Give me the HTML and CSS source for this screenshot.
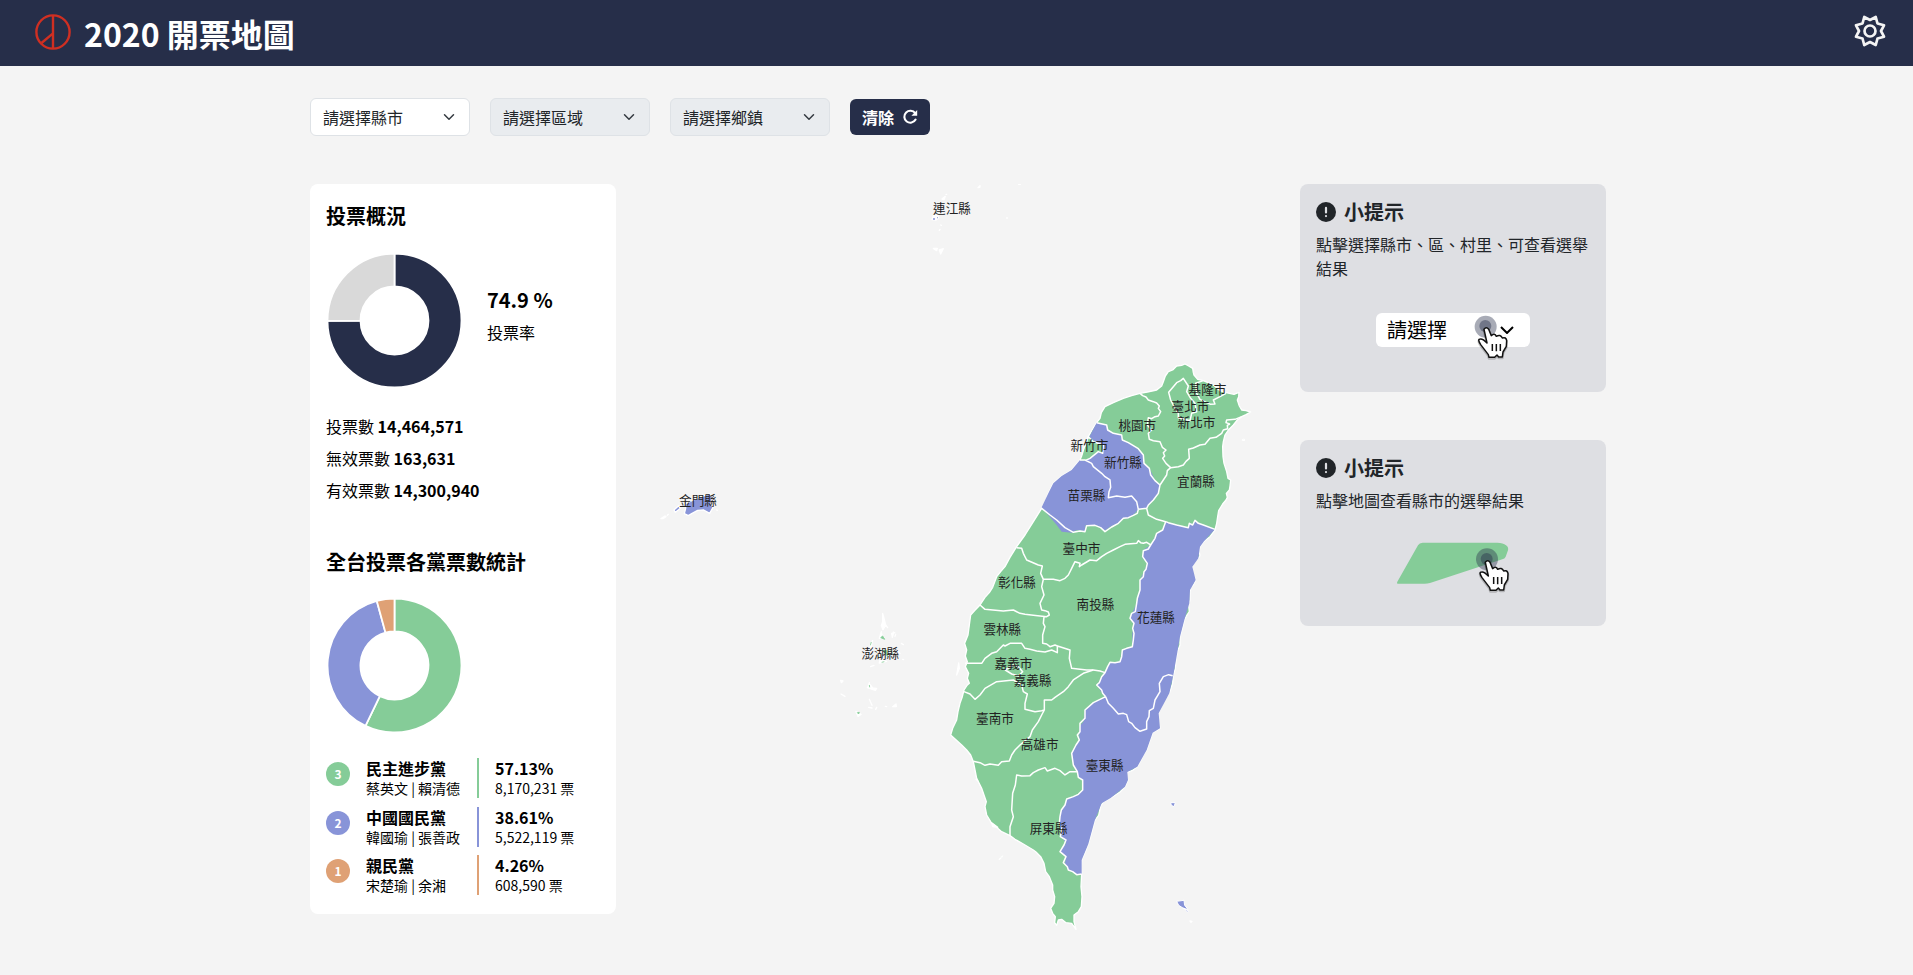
FILE: index.html
```html
<!DOCTYPE html>
<html lang="zh-Hant">
<head>
<meta charset="utf-8">
<title>2020 開票地圖</title>
<link rel="stylesheet" href="styles.css">
</head>
<body>
<header class="topbar">
  <svg class="logo" width="36" height="36" viewBox="0 0 36 36"><circle cx="18" cy="18" r="16.6"/><path d="M18 1.5v33M18 19.3 6.5 29"/></svg>
  <h1 class="brand">2020 開票地圖</h1>
  <svg class="gear" width="34" height="34" viewBox="-17 -17 34 34"><path d="M0-11 5.74-14 7.5-7.5 14-5.74 11 0 14 5.74 7.5 7.5 5.74 14 0 11-5.74 14-7.5 7.5-14 5.74-11 0-14-5.74-7.5-7.5-5.74-14Z"/><circle r="5.5"/></svg>
</header>

<main class="page">
  <div class="filters">
    <div class="select">請選擇縣市<svg width="12" height="12" viewBox="0 0 16 16"><path d="m2 5 6 6 6-6"/></svg></div>
    <div class="select disabled">請選擇區域<svg width="12" height="12" viewBox="0 0 16 16"><path d="m2 5 6 6 6-6"/></svg></div>
    <div class="select disabled">請選擇鄉鎮<svg width="12" height="12" viewBox="0 0 16 16"><path d="m2 5 6 6 6-6"/></svg></div>
    <button class="clear">清除<svg width="16" height="16" viewBox="0 0 16 16"><path class="arc" d="M13.2 4.2A6 6 0 1 0 13.6 10.6"/><path class="tip" d="M15.2 1v5.8H9.4Z"/></svg></button>
  </div>

  <div class="columns">
    <section class="panel">
      <h2>投票概況</h2>
      <div class="turnout">
        <svg class="donut" width="137" height="137" viewBox="-68.5 -68.5 137 137">
          <path fill="#262e49" d="M0-67A67 67 0 1 1-67 .4L-34 .2A34 34 0 1 0 0-34Z"/>
          <path fill="#d9d9d9" d="M-67 .4A67 67 0 0 1 0-67V-34A34 34 0 0 0-34 .2Z"/>
        </svg>
        <div><div class="rate">74.9 %</div><div>投票率</div></div>
      </div>
      <div class="totals">
        <div>投票數 <b>14,464,571</b></div>
        <div>無效票數 <b>163,631</b></div>
        <div>有效票數 <b>14,300,940</b></div>
      </div>
      <h2 class="second">全台投票各黨票數統計</h2>
      <svg class="donut" width="137" height="137" viewBox="-68.5 -68.5 137 137">
        <path fill="#85cc98" d="M0-67A67 67 0 1 1-29 60.4L-14.7 30.7A34 34 0 1 0 0-34Z"/>
        <path fill="#8894d8" d="M-29 60.4A67 67 0 0 1-17.7-64.6L-9-32.8A34 34 0 0 0-14.7 30.7Z"/>
        <path fill="#dfa175" d="M-17.7-64.6A67 67 0 0 1 0-67V-34A34 34 0 0 0-9-32.8Z"/>
      </svg>
      <ul class="parties">
        <li class="green"><span class="no">3</span><div class="who"><b>民主進步黨</b><small>蔡英文 | 賴清德</small></div><div class="votes"><b>57.13%</b><small>8,170,231 票</small></div></li>
        <li class="blue"><span class="no">2</span><div class="who"><b>中國國民黨</b><small>韓國瑜 | 張善政</small></div><div class="votes"><b>38.61%</b><small>5,522,119 票</small></div></li>
        <li class="orange"><span class="no">1</span><div class="who"><b>親民黨</b><small>宋楚瑜 | 余湘</small></div><div class="votes"><b>4.26%</b><small>608,590 票</small></div></li>
      </ul>
    </section>

    <svg class="map" width="636" height="760" viewBox="640 184 636 760">
      <!-- main island: one unit is a third of a pixel -->
      <g transform="translate(930 350) scale(.33333)">
        <path class="land dpp" d="M765 42 776 48 788 55 790 68 792 75 803 88 820 92 850 105 870 122 888 128 912 133 927 127 926 140 922 150 928 168 935 180 948 182 962 186 948 194 935 200 922 210 910 225 895 240 885 255 880 275 878 290 879 320 882 340 890 365 894 385 902 390 900 408 898 420 889 430 892 442 888 450 878 462 866 482 863 500 860 520 855 540 840 560 822 574 810 590 807 605 810 616 805 625 792 635 787 650 788 670 797 690 790 705 782 712 780 730 780 750 776 765 778 785 770 797 763 810 758 832 750 860 750 885 742 905 738 930 736 955 730 975 728 1000 718 1030 706 1045 697 1062 686 1090 686 1115 690 1135 678 1142 668 1148 662 1165 650 1200 640 1215 632 1232 622 1250 606 1262 592 1266 588 1280 594 1290 585 1310 570 1326 542 1344 520 1356 512 1368 506 1396 494 1412 487 1440 480 1465 475 1482 466 1505 455 1530 454 1550 455 1572 453 1610 456 1640 454 1670 445 1685 432 1695 432 1715 438 1738 425 1720 408 1718 395 1708 385 1710 380 1726 374 1718 376 1700 368 1690 362 1675 372 1660 374 1640 368 1620 368 1605 358 1580 347 1565 342 1540 332 1520 318 1506 310 1500 280 1482 255 1468 240 1457 215 1445 198 1430 185 1420 170 1395 165 1370 169 1355 163 1338 155 1315 140 1285 135 1260 130 1235 122 1215 110 1200 95 1185 62 1155 68 1135 80 1110 84 1085 90 1060 97 1040 102 1020 112 1005 118 1000 112 985 116 970 106 950 112 935 106 918 110 900 104 880 114 855 118 825 122 795 134 782 150 765 165 742 178 728 188 712 200 680 212 665 225 650 240 622 260 590 285 555 312 512 335 475 345 458 355 430 370 400 395 378 425 360 450 330 455 318 462 295 475 260 486 240 500 218 510 205 514 188 525 170 550 158 580 145 605 137 630 130 652 126 680 120 695 108 700 95 706 78 715 65 728 60 740 48 755 46Z"/>
        <path class="kmt" d="M500 218 515 222 530 225 533 240 550 250 575 255 577 270 595 278 615 290 640 315 642 340 658 355 668 375 675 392 690 405 685 430 670 450 655 465 650 475 625 478 615 490 595 505 580 505 565 520 540 530 525 542 505 528 495 525 467 525 465 543 440 540 425 548 395 545 380 525 335 472 355 430 370 400 395 378 425 360 450 330 462 333 480 325 505 305 518 310 520 285 495 275 478 260Z"/>
        <path class="kmt" d="M707 515 740 525 775 533 780 518 790 525 795 513 820 525 855 538 822 574 810 590 805 625 787 650 797 690 780 720 778 760 763 810 750 860 738 930 730 975 718 1030 686 1090 690 1135 668 1148 650 1200 622 1250 592 1266 594 1290 585 1310 542 1344 515 1360 494 1412 475 1482 455 1530 455 1572 440 1572 415 1560 405 1540 408 1520 390 1505 408 1480 395 1460 388 1420 390 1390 405 1365 410 1347 445 1335 458 1320 458 1290 445 1282 442 1265 430 1245 425 1210 448 1170 448 1130 460 1115 465 1080 490 1058 525 1042 510 1020 500 1005 525 968 540 937 570 935 577 900 607 890 607 850 612 825 600 805 620 760 630 720 630 690 642 665 652 640 638 625 640 600 662 585 680 550 698 540Z"/>
        <g class="border">
          <path d="M630 130 638 137 648 141 655 150 670 155 680 159 688 168 685 175 692 185 685 198 675 200 665 206 655 203 652 225 665 240 655 250 658 268 670 272 690 275 697 292 708 300 700 308 704 318 698 325 708 340 722 353 745 350 760 345 768 334 778 325 776 298 790 294 810 285 825 283 840 265 858 262 875 250 880 240 893 236 892 226 899 222 888 218 890 210 915 208 935 200M722 353 712 362 710 375 700 390 690 405M500 218 530 225 533 240 550 250 575 255 577 270 595 278 615 290 625 296 640 315 642 340 658 355 662 375 675 392 690 405 685 430 670 450 655 465 650 475 625 478M650 475 655 495 680 508 707 515 715 518 740 525 775 533 778 520 788 525 795 511 805 520 820 525 855 538M625 478 620 455 605 438 585 442 560 438 535 443 537 425 542 412 540 390 525 380 515 370 490 350 485 340 465 330 450 330M462 295 475 260 490 275 520 285 518 310 505 305 480 325 465 332"/>
          <path d="M335 475 360 495 380 510 405 533 430 547 450 543 465 545 470 527 495 526 512 533 525 545 545 531 565 520 580 505 595 503 610 496 622 490 625 478M707 515 698 540 680 550 675 565 662 585 650 577 640 580 632 578 625 572 620 580 585 583 570 590 550 600 530 610 515 620 500 632 480 630 455 645 448 650 450 640 435 635 425 655 415 675 405 685 390 692 370 688 340 688 332 670 337 648 325 645 290 630 280 610 275 595 260 593M340 688 335 710 342 735 330 760 335 780 345 782 355 786 358 795 350 800 310 796 285 793 270 790 250 780 220 783 165 778 150 765M342 800 340 820 345 830 338 855 338 880 350 882 360 890 375 885 382 888 382 908 365 900 345 906 320 903 300 898 285 895 275 880 240 880 225 888 220 885 200 905 185 910 165 925 155 940 105 940M380 887 420 900 418 925 425 955 450 958 470 960 490 960 510 963 525 968"/>
          <path d="M662 585 655 597 640 602 638 620 652 640 648 658 642 665 640 680 630 690 630 720 622 745 620 760 616 785 605 790 600 805 612 820 608 835 612 850 610 870 607 890 590 895 577 900 575 920 570 935 555 938 540 937 533 950 525 968 515 980 508 998 500 1005 515 1020 518 1030 527 1040M102 1025 120 1032 135 1048 150 1035 165 1015 200 995 250 990 275 1005 280 1025 292 1032 285 1060 285 1078 315 1085 335 1082 343 1080 343 1050 365 1050 375 1042 400 1025 415 1010 430 990 460 970 490 960M130 1234 150 1238 165 1246 180 1242 205 1246 215 1235 238 1233 245 1215 255 1200 270 1185 300 1160 307 1140 325 1115 335 1095 343 1080M240 1457 240 1430 250 1400 245 1380 248 1330 256 1305 260 1275 275 1278 300 1277 310 1268 325 1260 345 1253 352 1263 375 1255 390 1262 405 1275 420 1265 442 1265"/>
          <path d="M527 1040 490 1058 465 1080 465 1105 450 1120 450 1145 442 1155 448 1170 438 1185 425 1210 430 1245 442 1265 445 1282 458 1290 458 1320 445 1333 430 1340 410 1347 405 1365 394 1380 390 1400 388 1420 395 1440 391 1460 408 1470 402 1485 390 1505 408 1520 400 1538 412 1550 415 1560 428 1565 440 1574 455 1572M527 1040 535 1060 550 1075 565 1092 580 1090 590 1094 596 1115 605 1120 615 1133 630 1144 650 1137 650 1115 657 1100 658 1082 670 1075 675 1050 690 1025 688 1000 700 980 716 974 728 977"/>
          <path d="M760 85 752 92 740 98 716 127 722 150 735 175 745 190 745 203 780 212 785 190 800 185 795 160 782 145 770 125 775 108ZM820 92 797 100 800 130 810 148 830 158 842 163 855 162 850 150 870 140 888 130M226 960 250 945 265 950 278 965 265 978 245 972Z"/>
        </g>
        <path class="isle" d="m88 955-8 20 6-36ZM185 1418l18 14-15-2ZM138 1288l5 4"/>
        <path class="islet kmt" d="M722 1358h14l-4 12-8-4ZM740 1654l22-3 2 15 10 12-12-2-16-10ZM760 1674l16 10-4 2Z"/>
        <path class="isle" d="M780 1713l6 1-3 3ZM208 1528l4-3M937 270l5-2 1 3Z"/>
        <path class="islet dpp" d="m213 1521 5-3-2 4ZM939 269l2-2 1 3Z"/>
      </g>
      <!-- Kinmen -->
      <g transform="translate(650 450) scale(.33333)">
        <path class="land kmt" d="m107 161 20-10 30-12 22-8 9 12-5 17 6 12-10 18-18-10-18 1-18 10-10 6-12-6 4-16ZM72 180l14-13 5 8-15 12Z"/>
        <path class="isle" d="m33 206 12-8 3 2-9 6ZM52 196l3-3M200 180l2 1"/>
      </g>
      <!-- Penghu -->
      <g transform="translate(830 600) scale(.33333)">
        <path class="isle" d="m158 40 4 15 5 20-8 14-5-12 4-12ZM167 75l6 8M154 95l-6 20 14-3M128 122l-8 15 6 12M185 100l6-2-4 14ZM180 170l12 5M150 180l20 4-22 5ZM122 200l10-4M202 150l8 10M214 130l6 4M218 178l3 1M32 241l7 2-5 5ZM33 282l12 7M118 248l-4 12 20 8M112 263l28 2-4 6ZM118 298l8 18M116 322l10 2M137 328l3-6M166 319l4 1M188 320l10-8 1 8ZM78 335l15 8-9 6ZM190 96l5 3M197 104l-2 5"/>
        <path class="speck" d="M152 113l6-5 6 10ZM121 136l3-10M158 150l15 20-3-20M180 148l10 15M155 187l8-2M118 255l1 7M82 338l6-1-2 5Z"/>
      </g>
      <!-- Matsu -->
      <g transform="translate(900 175) scale(.33333)">
        <path class="isle" d="m126 72 10-8-4 10ZM138 58l2 0M234 38l6-6 0 4ZM356 28l5 0M320 129l2 0M96 134l4-12 14-2 2 8-8 7ZM122 150l2 1M118 166l2-3M100 220l12 0-2 7ZM118 225l12-4-8 16Z"/>
        <path fill="#8894d8" d="M99 130h6v4h-6ZM111 127h3v3h-3Z"/>
      </g>
      <g class="labels">
        <text x="952" y="213">連江縣</text><text x="698" y="504.500">金門縣</text><text x="880.300" y="658">澎湖縣</text>
        <text x="1207.500" y="394">基隆市</text><text x="1190.500" y="411">臺北市</text><text x="1196.500" y="427">新北市</text>
        <text x="1137.300" y="430">桃園市</text><text x="1089.500" y="450">新竹市</text><text x="1123" y="467">新竹縣</text>
        <text x="1086.500" y="500">苗栗縣</text><text x="1196" y="486">宜蘭縣</text><text x="1081.500" y="553">臺中市</text>
        <text x="1017" y="587">彰化縣</text><text x="1095.500" y="608.500">南投縣</text><text x="1156" y="622">花蓮縣</text>
        <text x="1002.300" y="634">雲林縣</text><text x="1013.500" y="668">嘉義市</text><text x="1032.600" y="685">嘉義縣</text>
        <text x="995" y="723">臺南市</text><text x="1039.600" y="748.500">高雄市</text><text x="1104.600" y="770">臺東縣</text><text x="1048.600" y="833">屏東縣</text>
      </g>
    </svg>

    <aside class="tips">
      <section class="tip-card first">
        <h3><svg width="20" height="20" viewBox="0 0 20 20"><circle cx="10" cy="10" r="10"/><path d="M10 5.900v4.600M10 14v.1"/></svg>小提示</h3>
        <p>點擊選擇縣市、區、村里、可查看選舉結果</p>
        <div class="mini">請選擇<svg class="mini-arrow" width="14" height="8" viewBox="0 0 14 8"><path d="m1 1 6 6 6-6"/></svg>
          <svg class="pointer" width="36" height="46" viewBox="550 418 108 138">
            <circle cx="588" cy="456" r="33" fill="#262e49" opacity=".4"/><circle cx="587" cy="454" r="18" fill="#262e49" opacity=".42"/>
            <g id="hand"><path class="shade" d="M583 464Q590 455 597 464L605 483Q615 474 620 485 632 478 638 490 649 486 651 498L650 515 640 532 638 547H627L622 541 615 548H598L596 540 573 510Q562 493 572 493 580 492 592 505Z"/><path d="M583 464Q590 455 597 464L605 483Q615 474 620 485 632 478 638 490 649 486 651 498L650 515 640 532 638 547H627L622 541 615 548H598L596 540 573 510Q562 493 572 493 580 492 592 505Z"/><path d="M608 508v21M620 508v22M632 508v21"/></g>
          </svg>
        </div>
      </section>
      <section class="tip-card">
        <h3><svg width="20" height="20" viewBox="0 0 20 20"><circle cx="10" cy="10" r="10"/><path d="M10 5.900v4.600M10 14v.1"/></svg>小提示</h3>
        <p>點擊地圖查看縣市的選舉結果</p>
        <svg class="shape" width="120" height="54" viewBox="315 1099 360 162">
          <path fill="#85cc98" d="M398 1107H622C645 1108 658 1118 654 1130L647 1149Q644 1155 637 1157L420 1228Q412 1230 404 1230H325Q319 1230 322 1224L384 1115Q388 1107 398 1107Z"/>
          <circle cx="591" cy="1157" r="33" fill="#262e49" opacity=".4"/><circle cx="590" cy="1156" r="18" fill="#262e49" opacity=".42"/>
          <use href="#hand" class="pointer-copy" x="3" y="702"/>
        </svg>
      </section>
    </aside>
  </div>
</main>
</body>
</html>
```
FILE: styles.css
```css
* { box-sizing: border-box; }
body { margin: 0; min-height: 975px; background: #f4f4f4; color: #212529; font: 16px/24px "Noto Sans CJK TC", sans-serif; overflow: hidden; }
h1, h2, h3, p, ul { margin: 0; padding: 0; }
svg { display: block; flex: none; }

.topbar { height: 66px; padding: 0 26px 0 35px; display: flex; align-items: center; background: #262e49; }
.logo { fill: none; stroke: #cf2f22; stroke-width: 2.4; margin-bottom: 2px; }
.brand { margin-left: 13px; color: #fff; font-size: 32px; line-height: 40px; font-weight: 700; }
.gear { margin: 0 0 4px auto; fill: none; stroke: #f4f4f4; stroke-width: 2.7; stroke-linejoin: round; }

.page { width: 1296px; margin-left: 310px; padding-top: 32px; }
.filters { display: flex; align-items: center; gap: 20px; height: 38px; }
.select { width: 160px; height: 38px; padding: 0 13px 0 12px; border: 1px solid #dee2e6; border-radius: 6px; background: #fff; display: flex; align-items: center; justify-content: space-between; }
.select svg { margin-right: 1px; fill: none; stroke: #343a40; stroke-width: 2; stroke-linecap: round; stroke-linejoin: round; }
.disabled { background: #e9ecef; }
.clear { width: 80px; height: 36px; padding: 0 12px; border: 0; border-radius: 6px; background: #262e49; color: #fff; font: inherit; font-weight: 700; display: flex; align-items: center; justify-content: space-between; }
.arc { fill: none; stroke: #fff; stroke-width: 2.1; stroke-linecap: round; }
.tip { fill: #fff; }

.columns { margin-top: 48px; display: grid; grid-template-columns: 306px 636px 306px; column-gap: 24px; align-items: start; }
.panel { height: 730px; padding: 16px; border-radius: 8px; background: #fff; color: #000; }
h2 { font-size: 20px; line-height: 32px; font-weight: 700; }
.turnout { margin-top: 20px; display: flex; align-items: center; gap: 24px; }
.turnout > div { padding-bottom: 14px; }
.rate { font-size: 20px; line-height: 32px; font-weight: 700; margin-bottom: 4px; }
.donut { stroke: #fff; stroke-width: 1.8; }
.totals { margin-top: 25px; display: grid; gap: 8px; }
.second { margin: 44px 0 19px; }
.parties { margin-top: 24px; list-style: none; display: grid; gap: 8.5px; }
.parties li { height: 40px; display: grid; grid-template-columns: 40px 111px 1fr; }
.no { width: 24px; height: 24px; margin-top: 4px; border-radius: 50%; background: var(--party); color: #fff; font-size: 12px; font-weight: 700; text-align: center; line-height: 24px; }
.green { --party: #85cc98; }
.blue { --party: #8894d8; }
.orange { --party: #dfa175; }
.parties b, .parties small { display: block; line-height: 20px; }
.parties small { font-size: 14px; }
.votes { padding-left: 16px; border-left: 2px solid var(--party); }

.dpp { fill: #85cc98; }
.kmt { fill: #8894d8; }
.land { stroke: #fff; stroke-width: 4; stroke-linejoin: round; }
.border { fill: none; stroke: #fff; stroke-width: 4.5; stroke-linejoin: round; }
.isle { fill: #fff; stroke: #fff; stroke-width: 4; stroke-linejoin: round; stroke-linecap: round; }
.islet { stroke: #fff; stroke-width: 3; }
.speck { fill: #85cc98; stroke: #85cc98; stroke-width: 2.5; }
.labels { font-size: 12.6px; fill: #222; text-anchor: middle; }

.tips { display: grid; gap: 48px; }
.tip-card { height: 186px; padding: 16px; border-radius: 8px; background: #dedfe3; }
.first { height: 208px; }
h3 { display: flex; align-items: center; gap: 8px; font-size: 20px; line-height: 24px; font-weight: 700; }
h3 svg { fill: #212529; }
h3 path { stroke: #dedfe3; stroke-width: 2.2; stroke-linecap: round; }
.tip-card p { margin-top: 8px; }
.mini { position: relative; width: 154px; height: 34px; margin: 33px 0 0 60px; padding: 0 16px 0 11px; border-radius: 6px; background: #fff; color: #000; font-size: 20px; line-height: 34px; display: flex; align-items: center; justify-content: space-between; }
.mini-arrow { fill: none; stroke: #000; stroke-width: 2; }
.pointer { position: absolute; left: 97.300px; top: 1.300px; }
#hand { fill: #fff; stroke: #111; stroke-width: 4.5; stroke-linejoin: round; }
#hand .shade { stroke: #0003; stroke-width: 8; transform: translateY(3px); }
.shape { margin: 28px 0 0 79px; }
```
